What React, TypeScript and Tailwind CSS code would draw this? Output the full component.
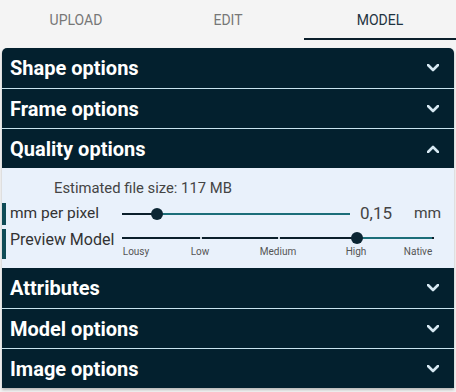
import React from "react";

const Chevron = ({ up }: { up?: boolean }) => (
  <svg width="12" height="8" viewBox="0 0 12 8" className="shrink-0">
    <polyline
      points={up ? "1,7 6,2 11,7" : "1,1 6,6 11,1"}
      fill="none"
      stroke="#d6e8f2"
      strokeWidth="2.6"
      strokeLinecap="round"
      strokeLinejoin="round"
    />
  </svg>
);

const Header = ({ title, up, first }: { title: string; up?: boolean; first?: boolean }) => (
  <div
    className={
      "h-[40px] flex items-center justify-between pl-[8px] pr-[15px] bg-[#03202e] " +
      (first ? "" : "border-t border-[#c9e3ee]")
    }
  >
    <span className="text-white font-bold text-[20px] leading-none">{title}</span>
    <Chevron up={up} />
  </div>
);

export default function App() {
  const levels = ["Lousy", "Low", "Medium", "High", "Native"];
  return (
    <div className="w-[456px] h-[392px] bg-[#f4f4f4] font-['Roboto',sans-serif] overflow-hidden">
      <div className="flex h-[40px]">
        <div className="flex-1 flex items-center justify-center text-[14px] text-[#777]">UPLOAD</div>
        <div className="flex-1 flex items-center justify-center text-[14px] text-[#777]">EDIT</div>
        <div className="flex-1 flex items-center justify-center text-[14px] text-[#1e3340] border-b-2 border-[#0b1f2b] pt-[2px]">
          MODEL
        </div>
      </div>
      <div className="mt-[8px] mx-[2px] rounded-t-[5px] overflow-hidden shadow-[0_2px_3px_rgba(0,0,0,0.25)]">
        <Header title="Shape options" first />
        <Header title="Frame options" />
        <Header title="Quality options" up />
        <div className="h-[100px] bg-[#e9f1fb] flex flex-col pt-[11px]">
          <div className="h-[18px] leading-[18px] text-[14.8px] text-[#444] pl-[52px]">
            Estimated file size: 117 MB
          </div>
          <div className="mt-[6px] h-[22px] flex items-center">
            <div className="w-[4px] h-full bg-[#0f4b56]" />
            <div className="w-[116px] pl-[4px] text-[15.5px] text-[#333]">mm per pixel</div>
            <div className="relative w-[228px] h-[12px]">
              <div className="absolute left-0 top-[5px] w-[35px] h-[2px] bg-[#0b1f2b]" />
              <div className="absolute left-[35px] top-[5px] right-0 h-[2px] bg-[#1c6e79]" />
              <div className="absolute left-[29px] top-0 w-[12px] h-[12px] rounded-full bg-[#0b2533]" />
            </div>
            <div className="ml-[10px] text-[17px] text-[#444]">0,15</div>
            <div className="ml-[22px] text-[15.5px] text-[#444]">mm</div>
          </div>
          <div className="mt-[4px] h-[30px] flex items-start">
            <div className="w-[4px] h-full bg-[#0f4b56]" />
            <div className="w-[116px] pl-[4px] text-[16px] text-[#333] leading-[22px]">Preview Model</div>
            <div className="relative w-[312px] h-[30px]">
              <div className="absolute left-0 top-[8px] w-[234px] h-[2px] bg-[#0b1f2b]" />
              <div className="absolute left-[234px] top-[8px] right-0 h-[2px] bg-[#1c6e79]" />
              <div className="absolute left-[78px] top-[8px] w-[2px] h-[2px] bg-[#cfd8de]" />
              <div className="absolute left-[156px] top-[8px] w-[2px] h-[2px] bg-[#cfd8de]" />
              <div className="absolute right-0 top-[8px] w-[2px] h-[2px] bg-[#0b1f2b]" />
              <div className="absolute left-[229px] top-[3px] w-[12px] h-[12px] rounded-full bg-[#0b2533]" />
              {levels.map((l, i) => (
                <div
                  key={l}
                  className="absolute top-[17px] text-[10px] leading-[11px] text-[#555] -translate-x-1/2"
                  style={{ left: i * 78 + (i === 0 ? 14 : i === 4 ? -16 : 0) }}
                >
                  {l}
                </div>
              ))}
            </div>
          </div>
        </div>
        <Header title="Attributes" first />
        <Header title="Model options" />
        <Header title="Image options" />
      </div>
    </div>
  );
}
